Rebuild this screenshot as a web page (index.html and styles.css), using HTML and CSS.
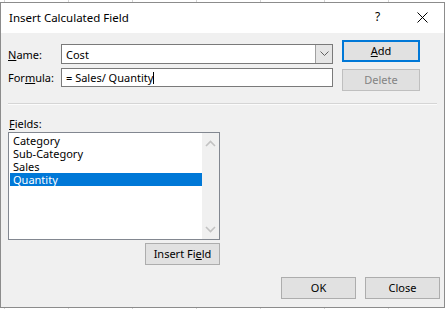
FILE: index.html
```html
<!DOCTYPE html>
<html>
<head>
<meta charset="utf-8">
<link rel="stylesheet" href="styles.css">
</head>
<body>
<div class="dialog">
  <div class="titlebar">
    <span class="title">Insert Calculated Field</span>
    <span class="help">?</span>
    <span class="xbtn"><svg width="11" height="11" viewBox="0 0 11 11"><path d="M0.5 0.5 L10.5 10.5 M10.5 0.5 L0.5 10.5" stroke="#000" stroke-width="1" fill="none"/></svg></span>
  </div>
  <div class="body">
    <div class="top">
      <div class="form">
        <div class="row">
          <span class="label"><u>N</u>ame:</span>
          <div class="combo">
            <span class="value">Cost</span>
            <span class="drop"><svg width="9" height="6" viewBox="0 0 9 6"><path d="M0.5 0.5 L4.5 4.5 L8.5 0.5" stroke="#606060" stroke-width="1" fill="none"/></svg></span>
          </div>
        </div>
        <div class="row">
          <span class="label">For<u>m</u>ula:</span>
          <div class="input"><span class="value">= Sales/ Quantity</span><span class="caret"></span></div>
        </div>
      </div>
      <div class="btncol">
        <button class="btn default"><u>A</u>dd</button>
        <button class="btn disabled">Delete</button>
      </div>
    </div>
    <div class="sep"></div>
    <div class="fields">
      <div class="flabel"><u>F</u>ields:</div>
      <div class="list">
        <ul class="items">
          <li>Category</li>
          <li>Sub-Category</li>
          <li>Sales</li>
          <li class="sel">Quantity</li>
        </ul>
        <div class="scroll">
          <svg width="11" height="7" viewBox="0 0 11 7"><path d="M1 6 L5.5 1.5 L10 6" stroke="#c2c2c2" stroke-width="1.6" fill="none"/></svg>
          <svg width="11" height="7" viewBox="0 0 11 7"><path d="M1 1 L5.5 5.5 L10 1" stroke="#c2c2c2" stroke-width="1.6" fill="none"/></svg>
        </div>
      </div>
      <div class="insrow"><button class="btn ins">Insert Fi<u>e</u>ld</button></div>
    </div>
    <div class="footer">
      <button class="btn foot">OK</button>
      <button class="btn foot">Close</button>
    </div>
  </div>
</div>
</body>
</html>
```
FILE: styles.css
```css
html, body {
  margin: 0;
  padding: 0;
}
body {
  width: 447px;
  height: 309px;
  overflow: hidden;
  background-color: #ffffff;
  background-image: linear-gradient(to right, #d4d4d4 1px, transparent 1px);
  background-size: 64px 100%;
  background-position: 4px 0;
  font-family: "Noto Sans", "Liberation Sans", sans-serif;
  font-size: 11px;
  color: #000;
}
.dialog {
  margin-top: 2px;
  width: 445px;
  height: 306px;
  box-sizing: border-box;
  border: 1px solid #8c8c8c;
  background: #f0f0f0;
  display: flex;
  flex-direction: column;
}
.titlebar {
  height: 30px;
  background: #fff;
  display: flex;
  align-items: center;
  position: relative;
}
.title {
  margin-left: 8px;
  font-size: 11.5px;
  margin-top: -1px;
}
.help {
  position: absolute;
  left: 374px;
  top: 5px;
  font-size: 12px;
}
.xbtn {
  position: absolute;
  left: 416px;
  top: 9px;
  line-height: 0;
}
.body {
  flex: 1;
  padding: 7px 4px 0 6px;
}
.top {
  display: flex;
}
.form {
  margin-top: 4px;
  display: flex;
  flex-direction: column;
  gap: 4px;
}
.row {
  display: flex;
  align-items: center;
}
.label {
  width: 53px;
  padding-left: 1px;
}
.combo, .input {
  width: 272px;
  box-sizing: border-box;
  border: 1px solid #7a7a7a;
  background: #fff;
  display: flex;
  align-items: center;
}
.combo {
  height: 20px;
}
.input {
  height: 19px;
}
.value {
  padding-left: 4px;
  line-height: 15px;
}
.combo .value {
  flex: 1;
}
.drop {
  width: 17px;
  height: 18px;
  box-sizing: border-box;
  border-left: 1px solid #a0a0a0;
  background: #e5e5e5;
  display: flex;
  align-items: center;
  justify-content: center;
}
.caret {
  width: 1px;
  height: 12px;
  background: #000;
}
.btncol {
  margin-left: 9px;
  display: flex;
  flex-direction: column;
  gap: 7px;
}
.btn {
  font-family: inherit;
  font-size: 11px;
  color: #000;
  background: #e1e1e1;
  border: 1px solid #adadad;
  box-sizing: border-box;
  height: 22px;
  padding: 0;
  margin: 0;
  line-height: 18px;
}
.btncol .btn {
  width: 78px;
}
.btn.default {
  border: 2px solid #0078d7;
}
.btn.disabled {
  color: #838383;
  border-color: #bfbfbf;
  background: #e0e0e0;
}
.sep {
  margin: 12px 3px 0 1px;
  height: 1px;
  background: #d5d5d5;
  border-bottom: 1px solid #fbfbfb;
}
.fields {
  width: 212px;
  margin-left: 1px;
}
.flabel {
  margin-top: 11px;
  height: 16px;
  line-height: 15px;
  padding-left: 1px;
}
.list {
  height: 108px;
  box-sizing: border-box;
  border: 1px solid #828790;
  background: #fff;
  display: flex;
}
.items {
  list-style: none;
  margin: 0;
  padding: 1px 0 0 1px;
  flex: 1;
}
.items li {
  height: 13px;
  line-height: 13px;
  padding-left: 3px;
}
.items li.sel {
  background: #0078d7;
  color: #fff;
}
.scroll {
  width: 17px;
  background: #f0f0f0;
  display: flex;
  flex-direction: column;
  justify-content: space-between;
  align-items: center;
  padding: 7px 0 6px;
  box-sizing: border-box;
}
.insrow {
  display: flex;
  justify-content: flex-end;
  margin-top: 3px;
}
.btn.ins {
  width: 75px;
}
.footer {
  display: flex;
  justify-content: flex-end;
  gap: 9px;
  margin-top: 12px;
}
.btn.foot {
  width: 75px;
}
```
